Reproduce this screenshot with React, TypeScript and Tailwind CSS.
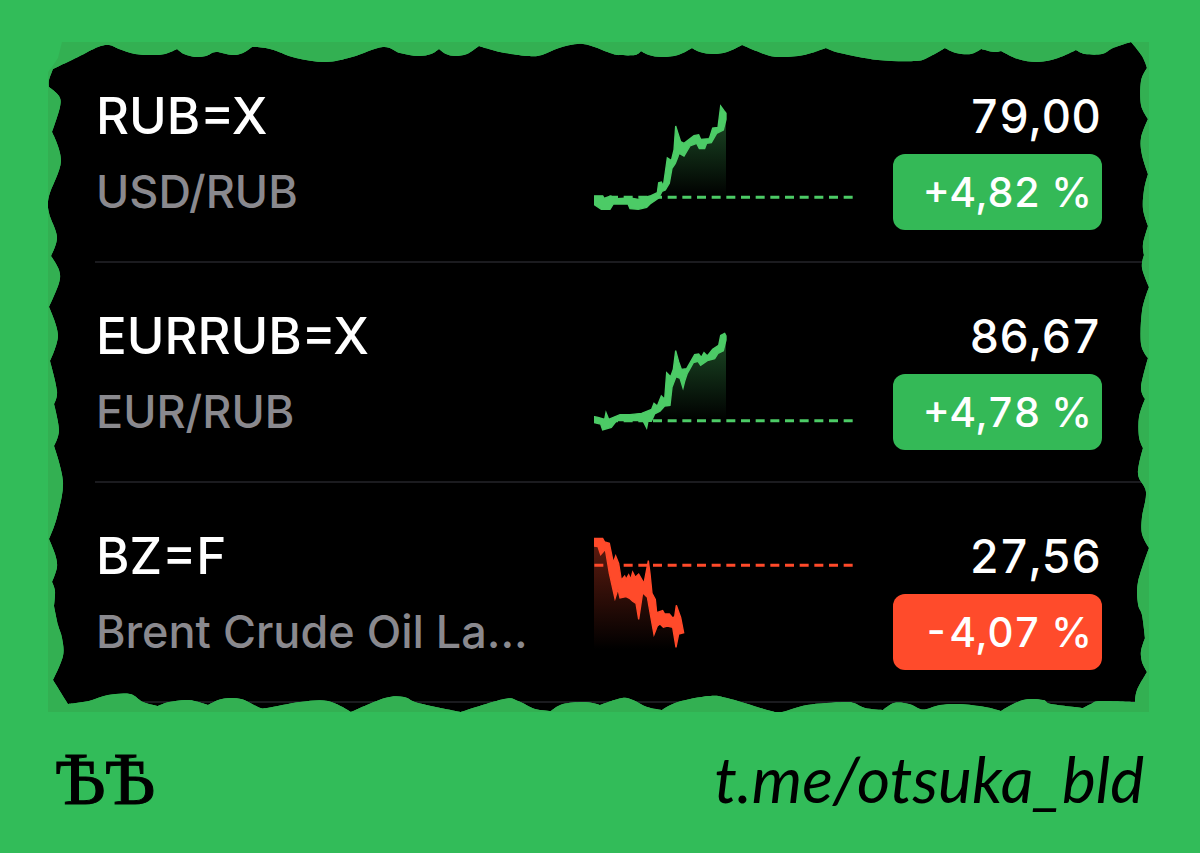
interface Quote {
  symbol: string;
  name: string;
  price: string;
  change: string;
  up: boolean;
  viewBox: string;
  baseline: number;
  line: string;
  area: string;
}

const quotes: Quote[] = [
  {
    symbol: 'RUB=X',
    name: 'USD/RUB',
    price: '79,00',
    change: '+4,82 %',
    up: true,
    viewBox: '72 -111 780 660',
    baseline: 352,
    line: 'M73 348 98 348 102 355 122 348 140 356 180 354 205 358 240 348 262 338 266 308 274 306 280 318 292 234 304 242 312 210 317 138 324 160 332 185 342 190 372 167 386 164 392 178 418 176 428 144 444 142 452 78 462 92 468 100 468 118 460 150 440 160 424 188 410 190 404 206 388 206 380 190 360 198 342 228 328 220 316 250 306 265 298 310 286 330 276 334 266 354 240 372 230 382 205 388 180 386 174 372 130 372 120 388 94 388 73 374Z',
    area: 'M268 352 298 300 316 240 342 215 372 185 390 195 440 150 468 110 468 352Z',
  },
  {
    symbol: 'EURRUB=X',
    name: 'EUR/RUB',
    price: '86,67',
    change: '+4,78 %',
    up: true,
    viewBox: '72 -141 780 660',
    baseline: 332,
    line: 'M73 320 84 322 104 328 108 308 116 328 150 314 180 314 215 310 245 298 252 280 262 288 274 258 284 268 290 188 302 200 310 178 317 122 326 155 334 178 350 176 374 134 386 132 394 142 402 128 412 138 428 118 446 106 452 76 464 70 468 78 468 90 460 122 444 130 434 146 412 152 392 166 384 154 370 158 352 190 344 214 339 234 330 205 318 200 306 232 300 286 284 288 270 304 254 312 244 334 234 334 230 354 220 334 205 332 140 332 124 352 98 360 92 342 73 338Z',
    area: 'M240 332 298 280 306 220 318 195 339 220 370 150 440 122 468 84 468 332Z',
  },
  {
    symbol: 'BZ=F',
    name: 'Brent Crude Oil La...',
    price: '27,56',
    change: '-4,07 %',
    up: false,
    viewBox: '72 -111 780 660',
    baseline: 136,
    line: 'M72 55 98 55 104 66 118 70 130 128 137 108 146 130 154 180 164 168 168 178 176 164 182 178 188 156 196 172 206 162 222 190 235 122 240 160 246 220 256 238 260 278 278 272 284 282 298 282 308 294 314 290 319 256 332 292 341 338 326 342 318 382 308 322 292 318 280 322 270 312 262 318 252 344 244 300 232 232 218 218 206 298 198 250 188 244 180 236 168 230 150 234 144 208 135 236 118 160 106 88 92 104 84 80 72 78Z',
    area: 'M72 70 106 84 135 220 225 215 252 330 310 318 318 378 318 388 72 388Z',
  },
];

// Outline of the torn panel, clockwise. "!" marks a sharp corner.
const tornEdge = `
53,69! 78,57 98,47 109,45 119,49 135,54 152,55 165,54 177,49! 184,54 195,57 206,56 216,52 232,55 243,53 252,47!
270,49 296,58 326,62 352,57 383,47 400,53 418,56 431,54 439,49! 446,54 455,56 467,54 479,46! 500,52 528,56 542,55
559,48 583,44 610,53 618,55 635,55 641,51! 649,55 662,57 678,55 692,48! 700,52 713,54 727,52 742,45! 767,55 782,57
804,55 826,48! 840,53 878,60 916,61 929,57 945,48! 956,53 971,54 981,49! 994,52 1001,51! 1018,59 1038,62 1058,58
1076,50! 1085,54 1102,54 1113,48 1131,42! 1142,56 1147,68! 1141,81 1141,105 1148,119! 1141,138 1142,155 1148,174!
1144,190 1143,209 1148,226! 1143,244 1144,255! 1142,268 1149,287! 1142,311 1141,344 1148,358! 1141,387 1145,399!
1139,417 1139,437 1143,448! 1138,474 1146,492 1142,517 1142,534 1149,548! 1138,582 1138,604 1142,615 1145,638!
1141,651 1142,662 1147,672! 1137,690 1135,702! 1100,701 1091,704 1083,708! 1051,704 1043,700 1023,700 1001,711!
985,707 960,704 940,705 927,709 920,709 909,704 894,703 883,710! 865,708 854,703 844,702 807,705 782,712 771,711
727,698 709,696 678,702 662,710! 647,707 633,700 622,698 600,705! 585,702 563,704 551,711! 535,709 518,701 504,699
461,712! 418,703 404,697 385,698 351,712! 328,701 300,702 267,708 258,707 241,699 222,699 208,705! 189,700 169,702
158,706! 143,702 130,694 108,695 89,701 68,704! 53,680! 63,656 62,638 58,625 54,606! 55,591 52,582! 57,567 55,554
49,539! 57,517 63,482 54,446! 59,430 54,404! 57,391 50,361! 58,335 49,307! 59,283 59,270 51,256! 57,237 49,213
49,196 61,161 52,132! 60,107 59,96 49,87! 49,80`;

function smoothPath(source: string) {
  const points = source.trim().split(/\s+/).map((item) => {
    const [x, y] = item.replace('!', '').split(',').map(Number);
    return { x, y, sharp: item.endsWith('!') };
  });
  const at = (i: number) => points[(i + points.length) % points.length];
  const tangent = (i: number) =>
    at(i).sharp ? { x: 0, y: 0 } : { x: (at(i + 1).x - at(i - 1).x) / 6, y: (at(i + 1).y - at(i - 1).y) / 6 };

  let d = `M${points[0].x} ${points[0].y}`;
  points.forEach((p, i) => {
    const q = at(i + 1);
    const a = tangent(i);
    const b = tangent(i + 1);
    d += `C${p.x + a.x} ${p.y + a.y} ${q.x - b.x} ${q.y - b.y} ${q.x} ${q.y}`;
  });
  return d + 'Z';
}

const tornPath = smoothPath(tornEdge);

// Green frame laid over the black list, with the torn outline cut out of it
function TornFrame() {
  return (
    <svg
      viewBox="48 42 1104 670"
      preserveAspectRatio="none"
      className="pointer-events-none absolute inset-0 size-full"
      aria-hidden="true"
    >
      <path d={`M40 30H1160V720H40Z${tornPath}`} fill="#32bc59" fillRule="evenodd" />
      <path d={`M62 42H1149V712H48V72L52 67L58 58Z${tornPath}`} fill="#33b052" fillRule="evenodd" />
    </svg>
  );
}

function Sparkline({ quote }: { quote: Quote }) {
  const id = `fade-${quote.name.slice(0, 3)}`;
  const color = quote.up ? '#4ccb66' : '#ff4a2a';

  return (
    <svg viewBox={quote.viewBox} className="h-[220px] w-[260px] shrink-0" aria-hidden="true">
      <defs>
        <linearGradient id={id} x1="0" y1="0" x2="0" y2="1">
          <stop offset="0" stopColor={color} stopOpacity="0.36" />
          <stop offset="1" stopColor={color} stopOpacity="0" />
        </linearGradient>
      </defs>
      <path d={quote.area} fill={`url(#${id})`} />
      <path d={`M73 ${quote.baseline}H850`} stroke={color} strokeWidth="9" strokeDasharray="27 17" />
      <path d={quote.line} fill={color} stroke={color} strokeWidth="4" />
    </svg>
  );
}

function QuoteRow({ quote }: { quote: Quote }) {
  return (
    <li className="flex h-[220px] border-b-2 border-[#1b1b1f]">
      <div className="min-w-0 flex-1 pt-[43px] pl-px">
        <h2 className="text-[51px] leading-[60px] font-medium whitespace-nowrap text-white">{quote.symbol}</h2>
        <p className="mt-4 text-[45px] leading-[60px] font-medium whitespace-nowrap text-[#8a898e]">{quote.name}</p>
      </div>
      <Sparkline quote={quote} />
      <div className="mr-[41px] ml-[39px] w-[209px] shrink-0 pt-[43px] text-right tabular-nums">
        <p className="pr-px text-[46px] leading-[60px] font-medium text-white">{quote.price}</p>
        <p
          className={`mt-2 rounded-xl pr-[10px] text-[41px] leading-[76px] font-medium whitespace-nowrap text-white ${
            quote.up ? 'bg-[#34b957]' : 'bg-[#ff4b2b]'
          }`}
        >
          {quote.change}
        </p>
      </div>
    </li>
  );
}

export default function App() {
  return (
    <div className="flex min-h-screen flex-col bg-[#32bc59] px-12 pt-[42px] font-['Inter','Liberation_Sans',sans-serif]">
      <main className="relative bg-black">
        <ul className="ml-[47px] pt-px pr-[9px] pb-[9px]">
          {quotes.map((quote) => (
            <QuoteRow key={quote.symbol} quote={quote} />
          ))}
        </ul>
        <TornFrame />
      </main>
      <footer className="flex flex-1 items-center justify-between px-2 pb-2 text-black">
        <span className="font-['Liberation_Serif',serif] text-[74px] leading-none [-webkit-text-stroke:1px_black]">
          ѢѢ
        </span>
        <a href="https://t.me/otsuka_bld" className="font-['Lato',sans-serif] text-[64px] leading-none italic">
          t.me/otsuka_bld
        </a>
      </footer>
    </div>
  );
}
